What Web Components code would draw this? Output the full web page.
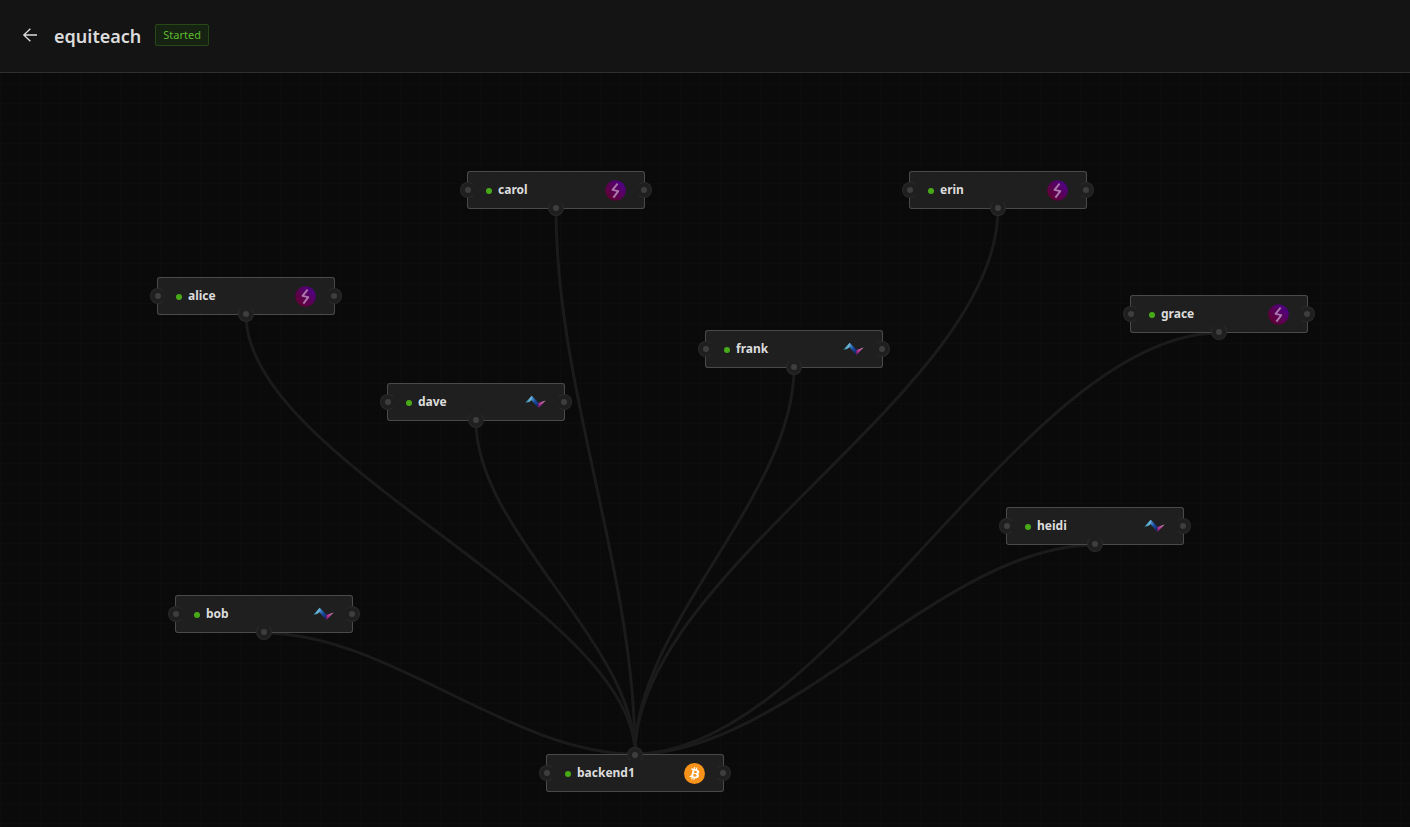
<!DOCTYPE html>
<html lang="en">
<head>
<meta charset="utf-8">
<title>equiteach</title>
<style>
  body {
    margin: 0;
    background: #0b0b0b;
    color: #dcdcdc;
    font-family: "Noto Sans", "Open Sans", sans-serif;
  }
</style>
</head>
<body>
<network-view></network-view>

<script>
const icons = {
  // Lightning daemon with a bolt in a round badge
  lightning: /*html*/ `
    <svg viewBox="0 0 22 22" aria-hidden="true">
      <defs>
        <linearGradient id="badge" x1="0" y1="1" x2="1" y2="0">
          <stop offset="0" stop-color="#640026"/>
          <stop offset=".5" stop-color="#5a0058"/>
          <stop offset="1" stop-color="#4a0098"/>
        </linearGradient>
      </defs>
      <circle cx="11" cy="11" r="10.8" fill="url(#badge)"/>
      <path d="M13.2 3.8 7.9 10.4 13.9 11.6 8.8 18.4" fill="none" stroke="#ac78ac" stroke-width="2" stroke-linejoin="round"/>
    </svg>`,
  // Folded ribbon in blue and magenta
  ribbon: /*html*/ `
    <svg viewBox="0 0 22 22" aria-hidden="true">
      <defs>
        <linearGradient id="rise" x1="0" y1="0" x2="1" y2="0">
          <stop offset="0" stop-color="#2f8fae"/>
          <stop offset="1" stop-color="#8cccee"/>
        </linearGradient>
        <linearGradient id="fall" x1="0" y1="0" x2="1" y2="1">
          <stop offset="0" stop-color="#62b0e4"/>
          <stop offset=".5" stop-color="#174a9c"/>
          <stop offset="1" stop-color="#151c5c"/>
        </linearGradient>
        <linearGradient id="tail" x1="0" y1="1" x2="1" y2="0">
          <stop offset="0" stop-color="#84107c"/>
          <stop offset=".5" stop-color="#b8409c"/>
          <stop offset="1" stop-color="#e8a8cc"/>
        </linearGradient>
      </defs>
      <path d="M.4 11.2 7 3.8 8.6 7.2 4.4 10.4Z" fill="url(#rise)"/>
      <path d="M7 3.8 14.2 11.2 14 16.8 6.6 8.4Z" fill="url(#fall)"/>
      <path d="M14.2 11.4 21.6 8.8 14 16.8Z" fill="url(#tail)"/>
    </svg>`,
  bitcoin: /*html*/ `
    <svg viewBox="0 0 32 32" aria-hidden="true">
      <circle cx="16" cy="16" r="16" fill="#f7931a"/>
      <path fill="#fff" d="M23.189 14.02c.314-2.096-1.283-3.223-3.465-3.975l.708-2.84-1.728-.43-.69 2.765c-.454-.114-.92-.22-1.385-.326l.695-2.783L15.596 6l-.708 2.839c-.376-.086-.746-.17-1.104-.26l.002-.009-2.384-.595-.46 1.846s1.283.294 1.256.312c.7.175.826.638.805 1.006l-.806 3.235c.048.012.11.03.18.057l-.183-.045-1.13 4.532c-.086.212-.303.531-.793.41.018.025-1.256-.313-1.256-.313l-.858 1.978 2.25.561c.418.105.828.215 1.231.318l-.715 2.872 1.727.43.708-2.84c.472.127.93.245 1.378.357l-.706 2.828 1.728.43.715-2.866c2.948.558 5.164.333 6.097-2.333.752-2.146-.037-3.385-1.588-4.192 1.13-.26 1.98-1.003 2.207-2.538zm-3.95 5.538c-.533 2.147-4.148.986-5.32.695l.95-3.805c1.172.293 4.929.872 4.37 3.11zm.535-5.569c-.487 1.953-3.495.96-4.47.717l.86-3.45c.975.243 4.118.696 3.61 2.733z"/>
    </svg>`
}

// Every node has the same size on the canvas
const NODE_WIDTH = 178
const NODE_HEIGHT = 38

const nodes = [
  { name: "alice", icon: "lightning", x: 157, y: 277 },
  { name: "bob", icon: "ribbon", x: 175, y: 595 },
  { name: "carol", icon: "lightning", x: 467, y: 171 },
  { name: "dave", icon: "ribbon", x: 387, y: 383 },
  { name: "erin", icon: "lightning", x: 909, y: 171 },
  { name: "frank", icon: "ribbon", x: 705, y: 330 },
  { name: "grace", icon: "lightning", x: 1130, y: 295 },
  { name: "heidi", icon: "ribbon", x: 1006, y: 507 },
  { name: "backend1", icon: "bitcoin", x: 546, y: 754 }
]

class StatusTag extends HTMLElement {
  constructor() {
    super()
    this.attachShadow({ mode: "open" }).innerHTML = /*html*/ `
      <style>
        :host {
          box-sizing: border-box;
          display: inline-block;
          height: 22px;
          padding: 0 7px;
          border: 1px solid #274916;
          border-radius: 2px;
          background: #162312;
          color: #5dba2c;
          font-size: 11px;
          line-height: 20px;
        }
      </style>
      <slot></slot>
    `
  }
}

class PageHeader extends HTMLElement {
  constructor() {
    super()
    this.attachShadow({ mode: "open" }).innerHTML = /*html*/ `
      <style>
        :host {
          box-sizing: border-box;
          display: flex;
          align-items: center;
          height: 73px;
          padding: 0 22px 2px;
          border-bottom: 1px solid #303030;
          background: #141414;
        }
        button {
          display: flex;
          margin: 0 16px 0 0;
          padding: 0;
          border: 0;
          background: none;
          color: #dcdcdc;
          cursor: pointer;
        }
        svg {
          width: 16px;
          height: 16px;
        }
        h1 {
          margin: 0 14px 0 0;
          padding-top: 2px;
          font-size: 18px;
          font-weight: 600;
          line-height: 32px;
        }
      </style>
      <button type="button" aria-label="Back">
        <svg viewBox="0 0 16 16" fill="none" stroke="currentColor" stroke-width="1.3" aria-hidden="true">
          <path d="M15 8H2M8.4 1.8 1.8 8 8.4 14.2"/>
        </svg>
      </button>
      <h1><slot></slot></h1>
      <slot name="tags"></slot>
    `
  }
}

class NodePort extends HTMLElement {
  constructor() {
    super()
    this.attachShadow({ mode: "open" }).innerHTML = /*html*/ `
      <style>
        :host {
          box-sizing: border-box;
          position: absolute;
          display: grid;
          place-items: center;
          width: 16px;
          height: 16px;
          border: 1px solid #2a2a2a;
          border-radius: 50%;
          background: #1f1f1f;
        }
        :host([side="left"]) { left: -7px; top: 11px; border-right-color: transparent; }
        :host([side="right"]) { right: -7px; top: 11px; border-left-color: transparent; }
        :host([side="top"]) { top: -7px; left: 81px; border-bottom-color: transparent; }
        :host([side="bottom"]) { bottom: -7px; left: 81px; border-top-color: transparent; }
        i {
          width: 6px;
          height: 6px;
          border-radius: 50%;
          background: #3e3e3e;
        }
      </style>
      <i></i>
    `
  }
}

class NetworkNode extends HTMLElement {
  connectedCallback() {
    const name = this.getAttribute("name")
    const icon = this.getAttribute("icon")
    const linkSide = icon === "bitcoin" ? "top" : "bottom"
    this.attachShadow({ mode: "open" }).innerHTML = /*html*/ `
      <style>
        :host {
          box-sizing: border-box;
          position: absolute;
          display: flex;
          align-items: center;
          width: ${NODE_WIDTH}px;
          height: ${NODE_HEIGHT}px;
          padding: 0 19px;
          border-radius: 3px;
          background: #1f1f1f;
          box-shadow: inset 0 0 0 1px #4a4a4a;
          font-size: 12px;
          font-weight: 700;
          line-height: 18px;
        }
        .status {
          width: 6px;
          height: 6px;
          margin: 1px 6px 0 0;
          border-radius: 50%;
          background: #49aa19;
        }
        .name {
          flex: 1;
        }
        svg {
          display: block;
          width: 21px;
          height: 21px;
        }
      </style>
      <span class="status"></span>
      <span class="name">${name}</span>
      ${icons[icon]}
      <node-port side="left"></node-port>
      <node-port side="right"></node-port>
      <node-port side="${linkSide}"></node-port>
    `
  }
}

class NetworkCanvas extends HTMLElement {
  // Cubic curve that leaves along the longer axis
  linkPath(from, to) {
    const dx = to.x - from.x
    const dy = to.y - from.y
    if (Math.abs(dx) > Math.abs(dy)) {
      return `M${from.x} ${from.y}C${from.x + dx / 3} ${from.y} ${to.x - dx / 3} ${to.y} ${to.x} ${to.y}`
    }
    return `M${from.x} ${from.y}C${from.x} ${from.y + dy / 3} ${to.x} ${to.y - dy / 3} ${to.x} ${to.y}`
  }

  connectedCallback() {
    const backend = nodes[nodes.length - 1]
    const target = { x: backend.x + NODE_WIDTH / 2, y: backend.y }
    const links = nodes.slice(0, -1).map((node) => {
      const start = { x: node.x + NODE_WIDTH / 2, y: node.y + NODE_HEIGHT }
      return `<path d="${this.linkPath(start, target)}"/>`
    })

    this.attachShadow({ mode: "open" }).innerHTML = /*html*/ `
      <style>
        :host {
          display: block;
          position: relative;
          overflow: hidden;
          background:
            linear-gradient(90deg, #0d0d0d 1px, transparent 1px) 0 10px / 20px 20px,
            linear-gradient(#0d0d0d 1px, transparent 1px) 0 10px / 20px 20px,
            #0a0a0a;
        }
        /* nodes keep the coordinates of the whole view */
        .layer {
          position: absolute;
          inset: -73px 0 0 0;
        }
        .links {
          width: 100%;
          height: 100%;
          fill: none;
          stroke: #1b1b1b;
          stroke-width: 3;
        }
      </style>
      <div class="layer">
        <svg class="links" aria-hidden="true">${links.join("")}</svg>
        ${nodes.map((node) => `<network-node name="${node.name}" icon="${node.icon}" style="left:${node.x}px;top:${node.y}px"></network-node>`).join("")}
      </div>
    `
  }
}

class NetworkView extends HTMLElement {
  constructor() {
    super()
    this.attachShadow({ mode: "open" }).innerHTML = /*html*/ `
      <style>
        :host {
          display: flex;
          flex-direction: column;
          min-height: 100vh;
        }
        network-canvas {
          flex: 1;
        }
      </style>
      <page-header>equiteach<status-tag slot="tags">Started</status-tag></page-header>
      <network-canvas></network-canvas>
    `
  }
}

customElements.define("status-tag", StatusTag)
customElements.define("page-header", PageHeader)
customElements.define("node-port", NodePort)
customElements.define("network-node", NetworkNode)
customElements.define("network-canvas", NetworkCanvas)
customElements.define("network-view", NetworkView)
</script>
</body>
</html>
